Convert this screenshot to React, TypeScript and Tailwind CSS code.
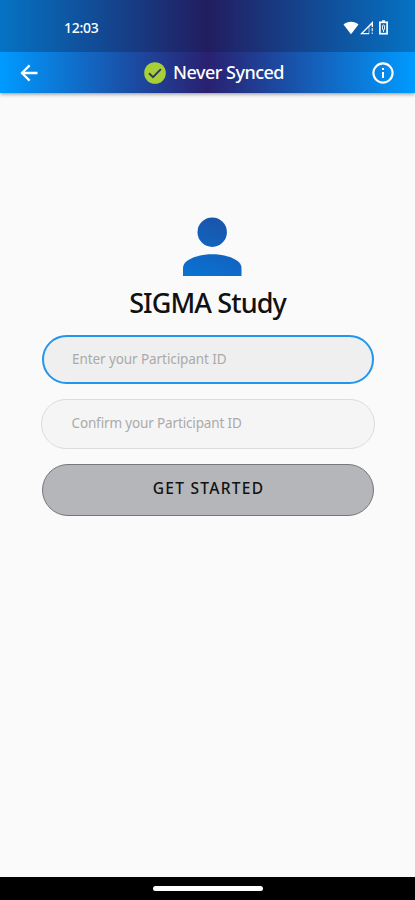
const FIELDS = [
    {
        label: 'Enter your Participant ID',
        className: 'mt-[14px] h-[49px] w-[332px] border-2 border-[#2196ee] bg-[#efefef] pb-[2px] pl-[28.5px] tracking-[-0.08px]',
    },
    {
        label: 'Confirm your Participant ID',
        className: 'mt-[15px] h-[50px] w-[334px] border border-[#dcdcdc] bg-[#f5f5f5] pb-[3px] pl-[30px] tracking-[-0.14px]',
    },
];

function StatusBar() {
    return (
        <div className="flex h-[52px] items-center justify-between bg-[#10183a]/30 pt-[3px] pr-[27px] pl-[64px] text-white">
            <span className="text-[14px] font-medium tracking-[-0.3px]">12:03</span>
            <div className="flex items-center">
                <svg width="16" height="14" viewBox="0 0 16 14" fill="currentColor">
                    <path d="M0.5 3.6C4.6-.2 11.4-.2 15.5 3.6L8 13.2Z" />
                </svg>
                <svg className="ml-[1px]" width="14" height="14" viewBox="0 0 14 14" fill="none" stroke="currentColor">
                    <path d="M12.3 6V1.8L1.6 12.6H9" strokeWidth="1.4" />
                    <path d="M9 5.4V12.6" strokeWidth="1" opacity="0.6" />
                    <path d="M12.3 7V10.2M12.3 11.4V13" strokeWidth="1.4" opacity="0.75" />
                </svg>
                <svg className="ml-[5px]" width="9" height="15" viewBox="0 0 9 15" fill="none" stroke="currentColor">
                    <path d="M3 1H6" strokeWidth="1.5" />
                    <rect x="0.9" y="2.3" width="7.2" height="11.4" strokeWidth="1.7" />
                    <rect x="3.5" y="5" width="2" height="5" rx="1" strokeWidth="0.9" />
                    <path d="M4.5 10V12" strokeWidth="1" />
                </svg>
            </div>
        </div>
    );
}

function Toolbar() {
    return (
        <div className="flex h-[41px] items-center justify-between pr-[20px] pl-[17px] text-white">
            <button aria-label="Back">
                <svg width="24" height="24" viewBox="0 0 24 24" fill="currentColor">
                    <path d="M20.5 10.8H7.7L13.4 5.2L11.8 3.6L3.4 12L11.8 20.4L13.4 18.8L7.7 13.2H20.5Z" />
                </svg>
            </button>
            <div className="flex items-center gap-[7px] pl-[16px]">
                <svg width="22" height="22" viewBox="0 0 22 22">
                    <circle cx="11" cy="11" r="10.8" fill="#a9cf38" />
                    <path d="M5 11.3L9 15.2L16.9 7.1" fill="none" stroke="#2a3a63" strokeWidth="1.9" />
                </svg>
                <span className="text-[18px] font-medium tracking-[-0.5px]">Never Synced</span>
            </div>
            <button aria-label="Info">
                <svg width="24" height="24" viewBox="0 0 24 24" fill="none" stroke="currentColor">
                    <circle cx="12" cy="12" r="9.6" strokeWidth="2.1" />
                    <path d="M12 11V17M12 7V9.1" strokeWidth="2" />
                </svg>
            </button>
        </div>
    );
}

function PersonIcon() {
    return (
        <svg width="60" height="60" viewBox="0 0 60 60">
            <defs>
                <linearGradient id="person" gradientUnits="userSpaceOnUse" x1="40" y1="2" x2="20" y2="62">
                    <stop offset="0" stopColor="#1a54aa" />
                    <stop offset="1" stopColor="#0a72d2" />
                </linearGradient>
            </defs>
            <g fill="url(#person)">
                <circle cx="30.2" cy="15.2" r="14.7" />
                <path d="M1 59V51C1 42.5 16 37.2 30.2 37.2C44.500 37.2 59.500 42.5 59.500 51V59Z" />
            </g>
        </svg>
    );
}

export default function App() {
    return (
        <div className="flex h-[900px] w-full flex-col bg-[#fafafa] font-['Noto_Sans',sans-serif]">
            <header className="bg-[linear-gradient(90deg,#009bff_0%,#2a2070_50%,#009bff_100%)] shadow-[0_1px_4px_rgba(0,0,0,0.45)]">
                <StatusBar />
                <Toolbar />
            </header>
            <main className="flex flex-1 flex-col items-center pt-[124px]">
                <div className="pl-[8px]">
                    <PersonIcon />
                </div>
                <h1 className="mt-[7px] mb-[-1px] text-[27px] leading-[38px] font-medium tracking-[-0.9px] text-[#111]">SIGMA Study</h1>
                {FIELDS.map((field) => (
                    <input
                        key={field.label}
                        placeholder={field.label}
                        className={`rounded-full text-[13.5px] outline-none placeholder:text-[#aaa] ${field.className}`}
                    />
                ))}
                <button className="mt-[15px] h-[52px] w-[332px] rounded-full border border-[#77787b] bg-[#b5b6ba] pb-[2px] pl-[2px] text-[15.5px] font-medium tracking-[1.3px] text-[#111]">
                    GET STARTED
                </button>
            </main>
            <footer className="flex h-[23px] justify-center bg-black pt-[9px]">
                <div className="h-[5px] w-[110px] rounded-full bg-white" />
            </footer>
        </div>
    );
}
